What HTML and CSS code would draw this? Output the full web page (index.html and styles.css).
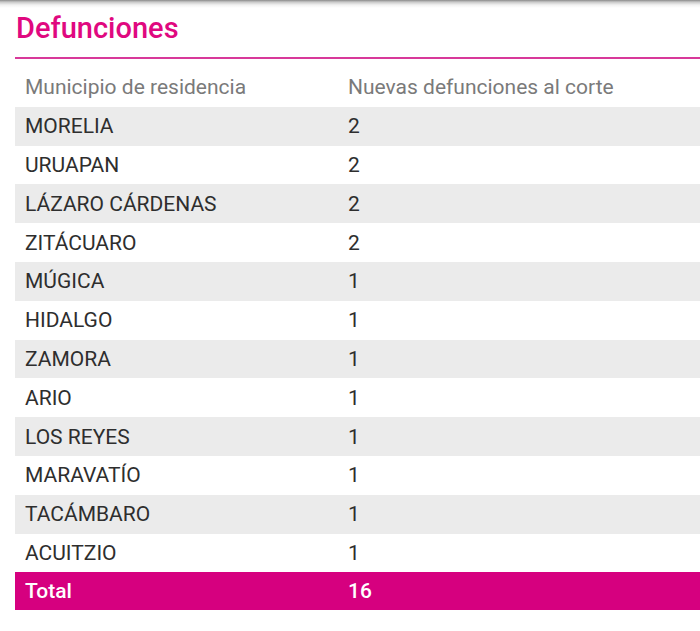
FILE: index.html
```html
<!DOCTYPE html>
<html lang="es">
<head>
<meta charset="utf-8">
<link rel="stylesheet" href="styles.css">
</head>
<body>
<div class="topbar"></div>
<section class="panel">
  <h2 class="title">Defunciones</h2>
  <table class="tbl">
    <thead>
      <tr><th class="c1">Municipio de residencia</th><th>Nuevas defunciones al corte</th></tr>
    </thead>
    <tbody>
      <tr class="alt"><td class="c1">MORELIA</td><td>2</td></tr>
      <tr><td class="c1">URUAPAN</td><td>2</td></tr>
      <tr class="alt"><td class="c1">LÁZARO CÁRDENAS</td><td>2</td></tr>
      <tr><td class="c1">ZITÁCUARO</td><td>2</td></tr>
      <tr class="alt"><td class="c1">MÚGICA</td><td>1</td></tr>
      <tr><td class="c1">HIDALGO</td><td>1</td></tr>
      <tr class="alt"><td class="c1">ZAMORA</td><td>1</td></tr>
      <tr><td class="c1">ARIO</td><td>1</td></tr>
      <tr class="alt"><td class="c1">LOS REYES</td><td>1</td></tr>
      <tr><td class="c1">MARAVATÍO</td><td>1</td></tr>
      <tr class="alt"><td class="c1">TACÁMBARO</td><td>1</td></tr>
      <tr><td class="c1">ACUITZIO</td><td>1</td></tr>
      <tr class="total"><td class="c1">Total</td><td>16</td></tr>
    </tbody>
  </table>
</section>
</body>
</html>
```
FILE: styles.css
```css
html, body {
  margin: 0;
  padding: 0;
  background: #fff;
  font-family: Roboto, "Noto Sans", sans-serif;
  overflow: hidden;
}
.topbar {
  height: 8px;
  background: linear-gradient(#8a8a8a 0, #c8c8c8 2px, #f2f2f2 5px, #fff 8px);
  margin-bottom: -8px;
}
.panel {
  padding: 0 0 0 15px;
}
.title {
  margin: 0;
  padding-top: 11px;
  height: 59px;
  box-sizing: border-box;
  border-bottom: 2px solid #d8399a;
  color: #e0087f;
  font-size: 29px;
  font-weight: 500;
  line-height: 34px;
  padding-left: 1px;
}
.tbl {
  width: 700px;
  border-collapse: collapse;
  margin-top: 9px;
  font-size: 21px;
}
.tbl th, .tbl td {
  text-align: left;
  padding: 0;
  height: 38.8px;
  vertical-align: middle;
}
.tbl th {
  font-weight: 400;
  color: #7a7a7a;
}
.tbl td {
  color: #2e2e2e;
}
.tbl .c1 {
  width: 323px;
  padding-left: 10px;
}
.tbl tr.alt {
  background: #ebebeb;
}
.tbl tr.total {
  background: #d6007f;
}
.tbl tr.total td {
  color: #fff;
  font-weight: 500;
  height: 38px;
}
```
